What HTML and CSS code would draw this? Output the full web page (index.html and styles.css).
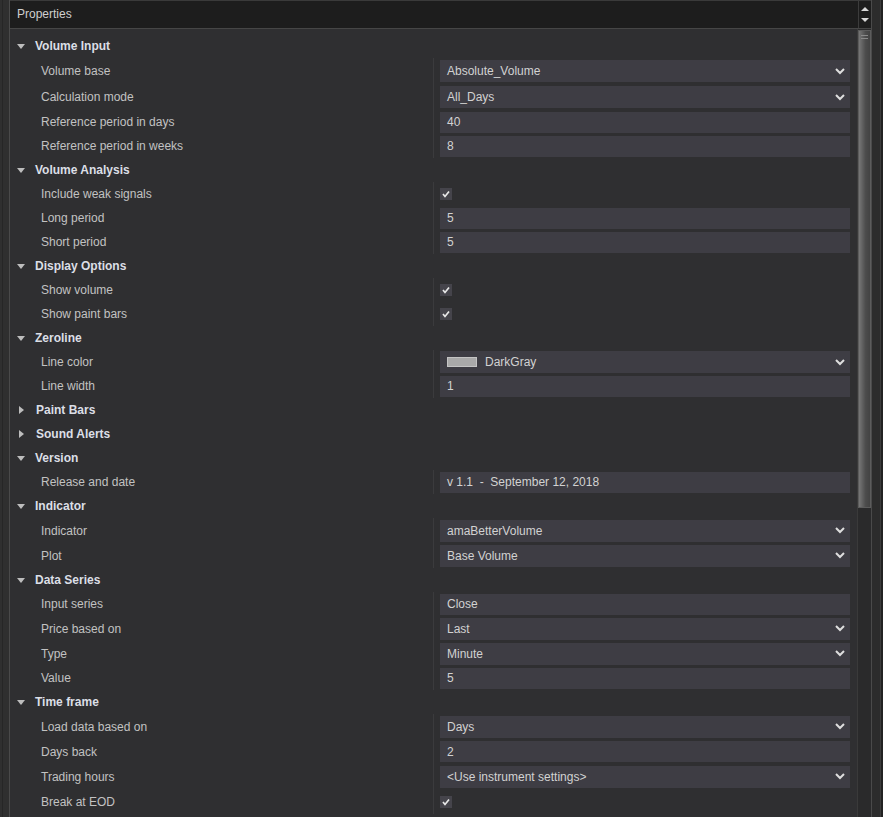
FILE: index.html
```html
<!DOCTYPE html>
<html>
<head>
    <meta charset="UTF-8">
    <title>Properties</title>
    <link rel="stylesheet" href="styles.css">
</head>
<body>
    <div class="frame">
        <div class="edge-left"></div>
        <div class="panel">
            <div class="panel-head">
                <div class="title">Properties</div>
                <div class="spin">
                    <span class="spin-up"></span>
                    <span class="spin-down"></span>
                </div>
            </div>
            <div class="panel-body">
                <div class="grid">
                    <!-- Volume Input -->
                    <div class="cat"><span class="tri-open"></span>Volume Input</div>
                    <div class="group">
                        <div class="row tall"><div class="name">Volume base</div><div class="val"><div class="box combo">Absolute_Volume<svg class="chev" width="10" height="7" viewBox="0 0 10 7"><polyline points="1,1 5,5 9,1"/></svg></div></div></div>
                        <div class="row tall"><div class="name">Calculation mode</div><div class="val"><div class="box combo">All_Days<svg class="chev" width="10" height="7" viewBox="0 0 10 7"><polyline points="1,1 5,5 9,1"/></svg></div></div></div>
                        <div class="row"><div class="name">Reference period in days</div><div class="val"><div class="box">40</div></div></div>
                        <div class="row"><div class="name">Reference period in weeks</div><div class="val"><div class="box">8</div></div></div>
                    </div>

                    <!-- Volume Analysis -->
                    <div class="cat"><span class="tri-open"></span>Volume Analysis</div>
                    <div class="group">
                        <div class="row"><div class="name">Include weak signals</div><div class="val"><svg class="check" width="12" height="12" viewBox="0 0 12 12"><polyline points="3,6 5,8.5 9,3.5"/></svg></div></div>
                        <div class="row"><div class="name">Long period</div><div class="val"><div class="box">5</div></div></div>
                        <div class="row"><div class="name">Short period</div><div class="val"><div class="box">5</div></div></div>
                    </div>

                    <!-- Display Options -->
                    <div class="cat"><span class="tri-open"></span>Display Options</div>
                    <div class="group">
                        <div class="row"><div class="name">Show volume</div><div class="val"><svg class="check" width="12" height="12" viewBox="0 0 12 12"><polyline points="3,6 5,8.5 9,3.5"/></svg></div></div>
                        <div class="row"><div class="name">Show paint bars</div><div class="val"><svg class="check" width="12" height="12" viewBox="0 0 12 12"><polyline points="3,6 5,8.5 9,3.5"/></svg></div></div>
                    </div>

                    <!-- Zeroline -->
                    <div class="cat"><span class="tri-open"></span>Zeroline</div>
                    <div class="group">
                        <div class="row"><div class="name">Line color</div><div class="val"><div class="box combo"><span class="swatch"></span>DarkGray<svg class="chev" width="10" height="7" viewBox="0 0 10 7"><polyline points="1,1 5,5 9,1"/></svg></div></div></div>
                        <div class="row"><div class="name">Line width</div><div class="val"><div class="box">1</div></div></div>
                    </div>

                    <div class="cat"><span class="tri-closed"></span>Paint Bars</div>
                    <div class="cat"><span class="tri-closed"></span>Sound Alerts</div>

                    <!-- Version -->
                    <div class="cat"><span class="tri-open"></span>Version</div>
                    <div class="group">
                        <div class="row"><div class="name">Release and date</div><div class="val"><div class="box">v 1.1 &nbsp;- &nbsp;September 12, 2018</div></div></div>
                    </div>

                    <!-- Indicator -->
                    <div class="cat"><span class="tri-open"></span>Indicator</div>
                    <div class="group">
                        <div class="row mid"><div class="name">Indicator</div><div class="val"><div class="box combo">amaBetterVolume<svg class="chev" width="10" height="7" viewBox="0 0 10 7"><polyline points="1,1 5,5 9,1"/></svg></div></div></div>
                        <div class="row mid"><div class="name">Plot</div><div class="val"><div class="box combo">Base Volume<svg class="chev" width="10" height="7" viewBox="0 0 10 7"><polyline points="1,1 5,5 9,1"/></svg></div></div></div>
                    </div>

                    <!-- Data Series -->
                    <div class="cat"><span class="tri-open"></span>Data Series</div>
                    <div class="group">
                        <div class="row"><div class="name">Input series</div><div class="val"><div class="box">Close</div></div></div>
                        <div class="row mid"><div class="name">Price based on</div><div class="val"><div class="box combo">Last<svg class="chev" width="10" height="7" viewBox="0 0 10 7"><polyline points="1,1 5,5 9,1"/></svg></div></div></div>
                        <div class="row mid"><div class="name">Type</div><div class="val"><div class="box combo">Minute<svg class="chev" width="10" height="7" viewBox="0 0 10 7"><polyline points="1,1 5,5 9,1"/></svg></div></div></div>
                        <div class="row"><div class="name">Value</div><div class="val"><div class="box">5</div></div></div>
                    </div>

                    <!-- Time frame -->
                    <div class="cat"><span class="tri-open"></span>Time frame</div>
                    <div class="group">
                        <div class="row mid"><div class="name">Load data based on</div><div class="val"><div class="box combo">Days<svg class="chev" width="10" height="7" viewBox="0 0 10 7"><polyline points="1,1 5,5 9,1"/></svg></div></div></div>
                        <div class="row mid"><div class="name">Days back</div><div class="val"><div class="box">2</div></div></div>
                        <div class="row mid"><div class="name">Trading hours</div><div class="val"><div class="box combo">&lt;Use instrument settings&gt;<svg class="chev" width="10" height="7" viewBox="0 0 10 7"><polyline points="1,1 5,5 9,1"/></svg></div></div></div>
                        <div class="row mid"><div class="name">Break at EOD</div><div class="val"><svg class="check" width="12" height="12" viewBox="0 0 12 12"><polyline points="3,6 5,8.5 9,3.5"/></svg></div></div>
                    </div>
                </div>
                <div class="scrollbar">
                    <div class="thumb">
                        <span class="grip"></span>
                        <span class="grip"></span>
                    </div>
                </div>
            </div>
        </div>
        <div class="edge-right"></div>
    </div>
</body>
</html>
```

FILE: styles.css
```css
html, body {
    margin: 0;
    height: 100%;
    overflow: hidden;
}

body {
    background-color: #2e2e2e;
    font-family: "Liberation Sans", Arial, sans-serif;
    font-size: 12px;
    color: #c4c4c4;
}

.frame {
    display: flex;
    height: 817px;
}

.edge-left {
    width: 9px;
    background-color: #2f2f2f;
    border-right: 1px solid #4a4a4a;
    box-shadow: inset 2px 0 0 #2f2f2f, inset 3px 0 0 #262626;
}

.panel {
    width: 861px;
    display: flex;
    flex-direction: column;
    background-color: #2f2f31;
}

.panel-head {
    display: flex;
    height: 27px;
    background-color: #1d1d1d;
    border-top: 1px solid #3a3a3a;
    border-bottom: 1px solid #464646;
}

.title {
    flex: 1;
    padding-left: 7px;
    line-height: 27px;
    color: #cfcfcf;
}

.spin {
    width: 13px;
    border-left: 1px solid #3c3c3c;
    display: flex;
    flex-direction: column;
    align-items: center;
    justify-content: space-between;
    padding: 6px 0 6px 0;
    box-sizing: border-box;
}

.spin-up {
    border-left: 4px solid transparent;
    border-right: 4px solid transparent;
    border-bottom: 4px solid #d8d8d8;
}

.spin-down {
    border-left: 4px solid transparent;
    border-right: 4px solid transparent;
    border-top: 4px solid #d8d8d8;
}

.panel-body {
    flex: 1;
    display: flex;
    min-height: 0;
}

.grid {
    width: 847px;
    padding-top: 5px;
}

/* category rows */
.cat {
    height: 24px;
    display: flex;
    align-items: center;
    padding-left: 7px;
    font-weight: bold;
    color: #dcdfe6;
}

.tri-open {
    width: 0;
    height: 0;
    margin: 1px 10px 0 0;
    border-left: 4px solid transparent;
    border-right: 4px solid transparent;
    border-top: 5px solid #bdbdbd;
}

.tri-closed {
    width: 0;
    height: 0;
    margin: 0 12px 0 2px;
    border-top: 4px solid transparent;
    border-bottom: 4px solid transparent;
    border-left: 5px solid #bdbdbd;
}

/* property rows */
.row {
    display: flex;
    height: 24px;
}

.row.tall {
    height: 26px;
}

.row.mid {
    height: 25px;
}

.name {
    width: 392px;
    padding-left: 31px;
    display: flex;
    align-items: center;
    color: #c2c2c2;
}

.val {
    flex: 1;
    display: flex;
    align-items: center;
    border-left: 1px solid #3b3b3d;
    padding: 0 7px 0 6px;
}

.box {
    flex: 1;
    height: 21px;
    display: flex;
    align-items: center;
    padding-left: 7px;
    background-color: #3e3d44;
    color: #d2d2d2;
    white-space: pre;
}

.box.combo {
    height: 22px;
}

.chev {
    margin-left: auto;
    margin-right: 5px;
    fill: none;
    stroke: #dedede;
    stroke-width: 2;
}

.swatch {
    width: 28px;
    height: 8px;
    margin-right: 8px;
    background-color: #a9a9a9;
    border: 1px solid #c4c4c4;
}

.check {
    background-color: #45444b;
    fill: none;
    stroke: #e8e8e8;
    stroke-width: 1.7;
}

/* scrollbar */
.scrollbar {
    width: 14px;
    background-color: #2a2a2b;
    border-left: 1px solid #3a3a3a;
    box-sizing: border-box;
}

.thumb {
    height: 478px;
    margin-top: 1px;
    border: 1px solid #5c5c5c;
    background: linear-gradient(to right, #777777, #4c4c4c 60%, #434343);
    display: flex;
    flex-direction: column;
    align-items: center;
    padding-top: 2px;
    box-sizing: border-box;
}

.grip {
    width: 7px;
    height: 1px;
    margin-top: 2px;
    background-color: #8a8a8a;
}

.edge-right {
    flex: 1;
    background-color: #222222;
    border-left: 1px solid #4a4a4a;
    box-shadow: inset 8px 0 0 #2c2c2c, inset 9px 0 0 #3c3c3c;
}
```
